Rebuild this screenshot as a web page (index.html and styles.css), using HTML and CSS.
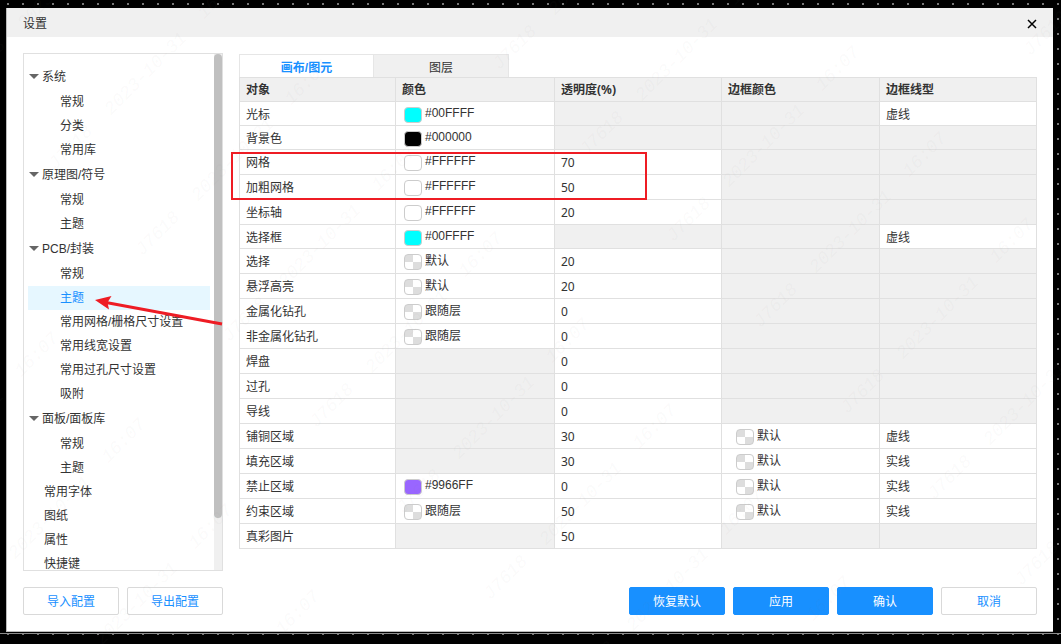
FILE: index.html
```html
<!DOCTYPE html>
<html lang="zh-CN">
<head>
<meta charset="utf-8">
<title>设置</title>
<link rel="stylesheet" href="styles.css">
</head>
<body class="canvas">
<section class="dialog" role="dialog" aria-labelledby="dialog-title">
  <header class="titlebar">
    <h1 class="title" id="dialog-title">设置</h1>
    <button class="close" type="button" aria-label="关闭">
      <svg width="10" height="10" viewBox="0 0 10 10" aria-hidden="true"><path d="M1 1l8 8M9 1L1 9" fill="none" stroke="#000" stroke-width="1.500"/></svg>
    </button>
  </header>
  <div class="content">
    <nav class="sidebar">
      <div class="tree">
        <button type="button" class="node group">系统</button>
        <button type="button" class="node child">常规</button>
        <button type="button" class="node child">分类</button>
        <button type="button" class="node child">常用库</button>
        <button type="button" class="node group">原理图/符号</button>
        <button type="button" class="node child">常规</button>
        <button type="button" class="node child">主题</button>
        <button type="button" class="node group">PCB/封装</button>
        <button type="button" class="node child">常规</button>
        <button type="button" class="node child selected">主题</button>
        <button type="button" class="node child">常用网格/栅格尺寸设置</button>
        <button type="button" class="node child">常用线宽设置</button>
        <button type="button" class="node child">常用过孔尺寸设置</button>
        <button type="button" class="node child">吸附</button>
        <button type="button" class="node group">面板/面板库</button>
        <button type="button" class="node child">常规</button>
        <button type="button" class="node child">主题</button>
        <button type="button" class="node leaf">常用字体</button>
        <button type="button" class="node leaf">图纸</button>
        <button type="button" class="node leaf">属性</button>
        <button type="button" class="node leaf">快捷键</button>
      </div>
      <div class="scrollbar"><div class="thumb"></div></div>
    </nav>
    <main class="main">
      <div class="tabs" role="tablist">
        <button type="button" class="tab active" role="tab" aria-selected="true">画布/图元</button>
        <button type="button" class="tab" role="tab" aria-selected="false">图层</button>
      </div>
      <table class="grid">
        <colgroup><col class="c1"><col class="c2"><col class="c3"><col class="c4"><col class="c5"></colgroup>
        <thead><tr><th>对象</th><th>颜色</th><th>透明度(%)</th><th>边框颜色</th><th>边框线型</th></tr></thead>
        <tbody>
          <tr><td>光标</td><td><div class="color"><span class="swatch cyan"></span><span class="name hex">#00FFFF</span></div></td><td class="off"></td><td class="off"></td><td>虚线</td></tr>
          <tr><td>背景色</td><td><div class="color"><span class="swatch black"></span><span class="name hex">#000000</span></div></td><td class="off"></td><td class="off"></td><td class="off"></td></tr>
          <tr class="tall"><td>网格</td><td><div class="color"><span class="swatch"></span><span class="name hex">#FFFFFF</span></div></td><td>70</td><td class="off"></td><td class="off"></td></tr>
          <tr class="tall"><td>加粗网格</td><td><div class="color"><span class="swatch"></span><span class="name hex">#FFFFFF</span></div></td><td>50</td><td class="off"></td><td class="off"></td></tr>
          <tr class="tall"><td>坐标轴</td><td><div class="color"><span class="swatch"></span><span class="name hex">#FFFFFF</span></div></td><td>20</td><td class="off"></td><td class="off"></td></tr>
          <tr><td>选择框</td><td><div class="color"><span class="swatch cyan"></span><span class="name hex">#00FFFF</span></div></td><td class="off"></td><td class="off"></td><td>虚线</td></tr>
          <tr class="tall"><td>选择</td><td><div class="color"><span class="swatch checker"></span><span class="name">默认</span></div></td><td>20</td><td class="off"></td><td class="off"></td></tr>
          <tr class="tall"><td>悬浮高亮</td><td><div class="color"><span class="swatch checker"></span><span class="name">默认</span></div></td><td>20</td><td class="off"></td><td class="off"></td></tr>
          <tr class="tall"><td>金属化钻孔</td><td><div class="color"><span class="swatch checker"></span><span class="name">跟随层</span></div></td><td>0</td><td class="off"></td><td class="off"></td></tr>
          <tr class="tall"><td>非金属化钻孔</td><td><div class="color"><span class="swatch checker"></span><span class="name">跟随层</span></div></td><td>0</td><td class="off"></td><td class="off"></td></tr>
          <tr class="tall"><td>焊盘</td><td class="off"></td><td>0</td><td class="off"></td><td class="off"></td></tr>
          <tr class="tall"><td>过孔</td><td class="off"></td><td>0</td><td class="off"></td><td class="off"></td></tr>
          <tr class="tall"><td>导线</td><td class="off"></td><td>0</td><td class="off"></td><td class="off"></td></tr>
          <tr class="tall"><td>铺铜区域</td><td class="off"></td><td>30</td><td><div class="color edge"><span class="swatch checker"></span><span class="name">默认</span></div></td><td>虚线</td></tr>
          <tr class="tall"><td>填充区域</td><td class="off"></td><td>30</td><td><div class="color edge"><span class="swatch checker"></span><span class="name">默认</span></div></td><td>实线</td></tr>
          <tr class="tall"><td>禁止区域</td><td><div class="color"><span class="swatch purple"></span><span class="name hex">#9966FF</span></div></td><td>0</td><td><div class="color edge"><span class="swatch checker"></span><span class="name">默认</span></div></td><td>实线</td></tr>
          <tr class="tall"><td>约束区域</td><td><div class="color"><span class="swatch checker"></span><span class="name">跟随层</span></div></td><td>50</td><td><div class="color edge"><span class="swatch checker"></span><span class="name">默认</span></div></td><td>实线</td></tr>
          <tr class="tall"><td>真彩图片</td><td class="off"></td><td>50</td><td class="off"></td><td class="off"></td></tr>
        </tbody>
      </table>
    </main>
  </div>
  <footer class="actions">
    <button type="button" class="btn">导入配置</button>
    <button type="button" class="btn">导出配置</button>
    <span class="spacer"></span>
    <button type="button" class="btn primary">恢复默认</button>
    <button type="button" class="btn primary">应用</button>
    <button type="button" class="btn primary">确认</button>
    <button type="button" class="btn">取消</button>
  </footer>
</section>

<!-- Diagonal watermark: one mark repeated down a diagonal, diagonals repeated across -->
<svg class="overlay watermark" aria-hidden="true">
  <defs>
    <g id="mark">
      <text transform="translate(145 73) rotate(-45)" y="6">2023-10-31</text>
      <text transform="translate(306 82) rotate(-45)" y="6">16:07</text>
      <text transform="translate(70 147) rotate(-45)" y="6">J7618</text>
    </g>
    <g id="diagonal">
      <use href="#mark" x="-174" y="-172"/><use href="#mark" x="-87" y="-86"/><use href="#mark"/>
      <use href="#mark" x="87" y="86"/><use href="#mark" x="174" y="172"/><use href="#mark" x="261" y="258"/>
      <use href="#mark" x="348" y="344"/><use href="#mark" x="435" y="430"/><use href="#mark" x="522" y="516"/>
    </g>
  </defs>
  <use href="#diagonal" x="-444" y="100"/>
  <use href="#diagonal"/>
  <use href="#diagonal" x="531" y="-14"/>
  <use href="#diagonal" x="1062" y="-28"/>
</svg>

<!-- Callouts: box round the grid rows, arrow to the selected page -->
<svg class="overlay" aria-hidden="true">
  <rect x="232" y="153" width="414" height="46" fill="none" stroke="#ee1c24" stroke-width="2"/>
  <path d="M222 324L106 302.500" stroke="#ee1c24" stroke-width="3" fill="none"/>
  <path d="M95 300L111.500 296L107.500 302.500L109 309.500Z" fill="#ee1c24"/>
</svg>
</body>
</html>
```
FILE: styles.css
```css
* { box-sizing: border-box; }

.canvas {
  margin: 0;
  height: 100vh;
  padding: 8px 8px 12px 6px;
  display: flex;
  flex-direction: column;
  position: relative;
  overflow: hidden;
  background:
    linear-gradient(#8c8c8c, #8c8c8c) 0 calc(100% - 10px) / 100% 1px no-repeat,
    radial-gradient(circle at 8px 4px, #777 0, #777 1px, transparent 1px) 0 0 / 15px 15px,
    #000;
  color: #333;
  font: 12px/16px "Noto Sans", "Noto Sans CJK SC", sans-serif;
}

button {
  font: inherit;
  color: inherit;
  margin: 0;
  padding: 0;
  border: 0;
  background: none;
  cursor: pointer;
}

.dialog {
  flex: 1;
  min-height: 0;
  display: flex;
  flex-direction: column;
  background: #fff;
  border: solid #bbb;
  border-width: 0 0 1px 1px;
}

.titlebar {
  display: flex;
  align-items: center;
  justify-content: space-between;
  height: 29px;
  padding: 2px 16px 0;
  background: #f0f0f0;
}
.title { margin: 0; font-size: 12px; font-weight: 400; }
.close { display: flex; }

.content {
  flex: 1;
  min-height: 0;
  display: flex;
  gap: 16px;
  padding: 16px 16px 0;
}

.sidebar {
  flex: none;
  width: 200px;
  display: flex;
  border: 1px solid #e0e0e0;
}
.tree {
  flex: 1;
  overflow: hidden;
  padding: 10px 4px 0;
  font-family: "Liberation Sans", "Noto Sans CJK SC", sans-serif;
}
.node {
  display: block;
  width: 100%;
  height: 24px;
  text-align: left;
  white-space: nowrap;
}
.group {
  display: flex;
  align-items: center;
  gap: 3px;
  height: 26px;
  padding-left: 1px;
}
.group::before {
  content: "";
  margin-bottom: 2px;
  border: 5px solid transparent;
  border-top-color: #666;
  border-bottom: 0;
}
.child { padding-left: 32px; }
.leaf { padding-left: 16px; }
.selected { background: #e6f7ff; color: #1890ff; }
.scrollbar { width: 8px; background: #f0f0f0; }
.thumb { height: 90%; border-radius: 4px; background: #c0c0c0; }

.main { flex: 1; min-width: 0; padding-top: 1px; }
.tabs { display: flex; }
.tab {
  width: 135px;
  height: 23px;
  padding-top: 4px;
  border: solid #e6e6e6;
  border-width: 1px 1px 0 0;
  background: #f0f0f0;
}
.tab.active {
  border-left-width: 1px;
  background: #fff;
  color: #1890ff;
  font-weight: 700;
  font-family: "Liberation Sans", "Noto Sans CJK SC", sans-serif;
}

.grid {
  width: 100%;
  border-collapse: collapse;
  table-layout: fixed;
}
.c1 { width: 156px; }
.c2 { width: 159px; }
.c3 { width: 167px; }
.c4 { width: 158px; }
.grid th, .grid td {
  height: 24px;
  padding: 2px 6px 0;
  border: 1px solid #e0e0e0;
  text-align: left;
}
.grid th { padding-top: 0; }
.grid .tall td { height: 25px; }
.grid th, .grid .off { background: #f0f0f0; }
.color {
  display: flex;
  align-items: center;
  gap: 3px;
  padding-left: 2px;
}
.edge { padding-left: 8px; }
.name {
  padding-bottom: 2px;
  font-family: "Liberation Sans", "Noto Sans CJK SC", sans-serif;
}
.hex { padding-bottom: 4px; }
.swatch {
  width: 18px;
  height: 16px;
  border: 1px solid #ccc;
  border-radius: 4px;
  background: #fff;
}
.cyan { background: #0ff; }
.black { background: #000; }
.purple { background: #96f; }
.checker { background: conic-gradient(#fff 25%, #ddd 0 50%, #fff 0 75%, #ddd 0); }

.actions {
  display: flex;
  gap: 8px;
  padding: 16px;
}
.spacer { flex: 1; margin-right: -8px; }
.btn {
  width: 96px;
  height: 28px;
  padding-top: 2px;
  border: 1px solid #d9d9d9;
  border-radius: 2px;
  background: #fff;
  color: #1890ff;
}
.primary { border-color: #1890ff; background: #1890ff; color: #fff; }

.overlay {
  position: absolute;
  inset: 0;
  width: 100%;
  height: 100%;
  pointer-events: none;
}
.watermark {
  fill: rgba(128, 128, 128, 0.05);
  font: italic 18px "Liberation Mono", monospace;
  text-anchor: middle;
}
```
